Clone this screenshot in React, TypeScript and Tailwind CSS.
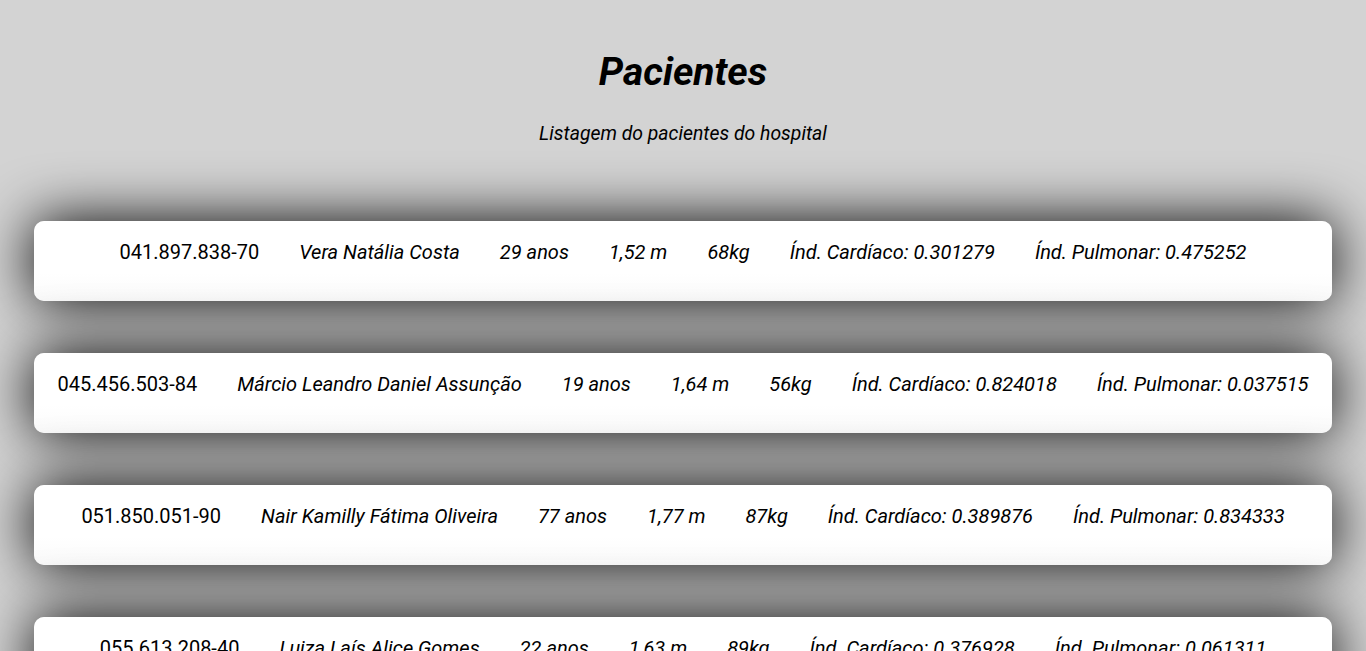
const pacientes = [
  { cpf: "041.897.838-70", nome: "Vera Natália Costa", idade: 29, altura: "1,52", peso: 68, cardiaco: "0.301279", pulmonar: "0.475252" },
  { cpf: "045.456.503-84", nome: "Márcio Leandro Daniel Assunção", idade: 19, altura: "1,64", peso: 56, cardiaco: "0.824018", pulmonar: "0.037515" },
  { cpf: "051.850.051-90", nome: "Nair Kamilly Fátima Oliveira", idade: 77, altura: "1,77", peso: 87, cardiaco: "0.389876", pulmonar: "0.834333" },
  { cpf: "055.613.208-40", nome: "Luiza Laís Alice Gomes", idade: 22, altura: "1,63", peso: 89, cardiaco: "0.376928", pulmonar: "0.061311" },
];

export default function App() {
  return (
    <div className="min-h-screen bg-[#d3d3d3] text-black font-['Roboto',sans-serif] pb-16">
      <header className="pt-[50px] text-center">
        <h1 className="text-[39px] leading-[44px] font-bold italic">Pacientes</h1>
        <p className="mt-[28px] text-[19.4px] leading-[24px] italic">Listagem do pacientes do hospital</p>
      </header>

      <ul className="mt-[75px] flex flex-col gap-[52px] items-center">
        {pacientes.map((p) => (
          <li
            key={p.cpf}
            className="w-[95%] h-[80px] pt-[19px] rounded-[10px] bg-[linear-gradient(to_bottom,#ffffff_65%,#fafafa)] shadow-[0_0_58px_rgba(0,0,0,1)]"
          >
            <div className="flex justify-center gap-[40px] text-[20px] leading-[24px]">
              <span>{p.cpf}</span>
              <span className="italic">{p.nome}</span>
              <span className="italic">{p.idade} anos</span>
              <span className="italic">{p.altura} m</span>
              <span className="italic">{p.peso}kg</span>
              <span className="italic">Índ. Cardíaco: {p.cardiaco}</span>
              <span className="italic">Índ. Pulmonar: {p.pulmonar}</span>
            </div>
          </li>
        ))}
      </ul>
    </div>
  );
}
